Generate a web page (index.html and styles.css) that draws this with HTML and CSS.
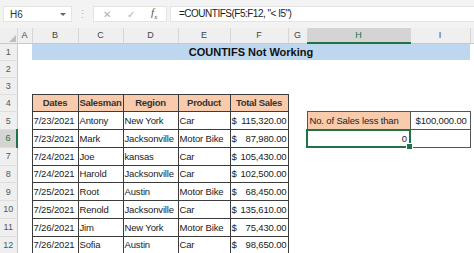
FILE: index.html
```html
<!DOCTYPE html>
<html lang="en">
<head>
  <meta charset="UTF-8">
  <title>COUNTIFS Not Working</title>
  <link rel="stylesheet" href="styles.css">
</head>
<body>
  <div class="toolbar">
    <div class="namebox"><span>H6</span><span class="caret"></span></div>
    <div class="grip">&#8942;</div>
    <div class="fbtns">
      <span class="fbtn">&#10005;</span>
      <span class="fbtn">&#10003;</span>
      <span class="fbtn fx">f<sub>x</sub></span>
    </div>
    <div class="formula">=COUNTIFS(F5:F12, "&lt; I5")</div>
  </div>
  <table class="sheet">
    <colgroup>
      <col class="c-rh"><col class="c-a"><col class="c-b"><col class="c-c"><col class="c-d"><col class="c-e"><col class="c-f"><col class="c-g"><col class="c-h"><col class="c-i"><col class="c-j">
    </colgroup>
    <tr class="colhead">
      <th class="corner"><svg width="7" height="7" viewBox="0 0 7 7"><path d="M7 0V7H0Z" fill="#bdbdbd"/></svg></th>
      <th>A</th><th>B</th><th>C</th><th>D</th><th>E</th><th>F</th><th>G</th><th class="sel-col">H</th><th>I</th><th></th>
    </tr>
    <tr class="r-top">
      <th class="rh">1</th><td></td>
      <td colspan="8" class="title">COUNTIFS Not Working</td><td></td>
    </tr>
    <tr class="r-top"><th class="rh">2</th><td></td><td></td><td></td><td></td><td></td><td></td><td></td><td></td><td></td><td></td></tr>
    <tr class="r-top"><th class="rh">3</th><td></td><td></td><td></td><td></td><td></td><td></td><td></td><td></td><td></td><td></td></tr>
    <tr>
      <th class="rh">4</th><td></td>
      <td class="t hd">Dates</td><td class="t hd">Salesman</td><td class="t hd">Region</td><td class="t hd">Product</td><td class="t hd">Total Sales</td>
      <td></td><td></td><td></td><td></td>
    </tr>
    <tr>
      <th class="rh">5</th><td></td>
      <td class="t">7/23/2021</td><td class="t">Antony</td><td class="t">New York</td><td class="t">Car</td>
      <td class="t"><div class="cur"><span>$</span><span>115,320.00</span></div></td>
      <td></td>
      <td class="m lbl">No. of Sales less than</td>
      <td class="m"><div class="cur"><span>$</span><span>100,000.00</span></div></td><td></td>
    </tr>
    <tr>
      <th class="rh sel-row">6</th><td></td>
      <td class="t">7/23/2021</td><td class="t">Mark</td><td class="t">Jacksonville</td><td class="t">Motor Bike</td>
      <td class="t"><div class="cur"><span>$</span><span>87,980.00</span></div></td>
      <td></td>
      <td class="m active">0<span class="handle"></span></td>
      <td class="m"></td><td></td>
    </tr>
    <tr>
      <th class="rh">7</th><td></td>
      <td class="t">7/24/2021</td><td class="t">Joe</td><td class="t">kansas</td><td class="t">Car</td>
      <td class="t"><div class="cur"><span>$</span><span>105,430.00</span></div></td>
      <td></td><td></td><td></td><td></td>
    </tr>
    <tr>
      <th class="rh">8</th><td></td>
      <td class="t">7/24/2021</td><td class="t">Harold</td><td class="t">Jacksonville</td><td class="t">Car</td>
      <td class="t"><div class="cur"><span>$</span><span>102,500.00</span></div></td>
      <td></td><td></td><td></td><td></td>
    </tr>
    <tr>
      <th class="rh">9</th><td></td>
      <td class="t">7/25/2021</td><td class="t">Root</td><td class="t">Austin</td><td class="t">Motor Bike</td>
      <td class="t"><div class="cur"><span>$</span><span>68,450.00</span></div></td>
      <td></td><td></td><td></td><td></td>
    </tr>
    <tr>
      <th class="rh">10</th><td></td>
      <td class="t">7/25/2021</td><td class="t">Renold</td><td class="t">Jacksonville</td><td class="t">Car</td>
      <td class="t"><div class="cur"><span>$</span><span>135,610.00</span></div></td>
      <td></td><td></td><td></td><td></td>
    </tr>
    <tr>
      <th class="rh">11</th><td></td>
      <td class="t">7/26/2021</td><td class="t">Jim</td><td class="t">New York</td><td class="t">Motor Bike</td>
      <td class="t"><div class="cur"><span>$</span><span>75,430.00</span></div></td>
      <td></td><td></td><td></td><td></td>
    </tr>
    <tr>
      <th class="rh">12</th><td></td>
      <td class="t">7/26/2021</td><td class="t">Sofia</td><td class="t">Austin</td><td class="t">Car</td>
      <td class="t"><div class="cur"><span>$</span><span>98,650.00</span></div></td>
      <td></td><td></td><td></td><td></td>
    </tr>
  </table>
</body>
</html>
```

FILE: styles.css
```css
body {
  margin: 0;
  width: 474px;
  height: 253px;
  overflow: hidden;
  background: #fff;
  font-family: "Liberation Sans", Arial, sans-serif;
  color: #222;
}
.toolbar {
  display: flex;
  align-items: center;
  height: 28px;
  padding-left: 3px;
  background: #f3f3f3;
  box-sizing: border-box;
}
.namebox {
  width: 69px;
  height: 16px;
  background: #fff;
  border: 1px solid #e4e4e4;
  box-sizing: border-box;
  display: flex;
  align-items: center;
  justify-content: space-between;
  padding: 0 5px 0 6px;
  font-size: 10px;
  color: #333;
}
.caret {
  width: 0;
  height: 0;
  border-left: 3px solid transparent;
  border-right: 3px solid transparent;
  border-top: 3px solid #666;
}
.grip {
  width: 21px;
  text-align: center;
  font-size: 11px;
  color: #b5b5b5;
}
.fbtns {
  width: 74px;
  height: 16px;
  padding-left: 1px;
  background: #fff;
  border: 1px solid #e4e4e4;
  box-sizing: border-box;
  display: flex;
  align-items: center;
}
.fbtn {
  width: 24px;
  text-align: center;
  font-size: 10px;
  color: #b0b0b0;
}
.fx {
  font-family: "Liberation Serif", serif;
  font-style: italic;
  font-size: 11px;
  color: #555;
}
.fx sub {
  font-size: 7px;
}
.formula {
  flex: 1;
  height: 16px;
  margin-left: 3px;
  padding-left: 8px;
  background: #fff;
  border: 1px solid #e4e4e4;
  border-right: none;
  box-sizing: border-box;
  font-size: 10px;
  letter-spacing: -0.5px;
  line-height: 14px;
  color: #222;
  white-space: nowrap;
}
.sheet {
  table-layout: fixed;
  width: 474px;
  border-collapse: collapse;
  font-size: 9.5px;
}
.c-rh { width: 17px; }
.c-a { width: 15px; }
.c-b { width: 46px; }
.c-c { width: 45px; }
.c-d { width: 55px; }
.c-e { width: 52px; }
.c-f { width: 58px; }
.c-g { width: 19px; }
.c-h { width: 103px; }
.c-i { width: 60px; }
.c-j { width: 4px; }
.sheet td,
.sheet th {
  padding: 0;
  white-space: nowrap;
  overflow: hidden;
}
.colhead th {
  background: #efefef;
  border-right: 1px solid #d6d6d6;
  border-bottom: 1px solid #c9c9c9;
  font-weight: normal;
  font-size: 9px;
  color: #444;
}
.colhead .corner {
  text-align: right;
  vertical-align: bottom;
  padding: 0 1px 1px 0;
  line-height: 0;
}
.colhead .sel-col {
  background: #d4d4d4;
  border-bottom: 2px solid #217346;
  color: #217346;
}
.sheet tr {
  height: 17.75px;
}
.sheet tr.r-top {
  height: 17px;
}
.sheet tr.colhead {
  height: 15px;
}
.rh {
  background: #efefef;
  border-right: 1px solid #c9c9c9;
  border-bottom: 1px solid #dedede;
  font-weight: normal;
  font-size: 9px;
  color: #555;
}
.rh.sel-row {
  background: #d4d4d4;
  border-right: 2px solid #217346;
  color: #217346;
}
.title {
  background: #bdd7ee;
  text-align: center;
  font-weight: bold;
  font-size: 11px;
  color: #111;
}
.t {
  border: 1px solid #3c3c3c;
  padding: 0 1px !important;
  letter-spacing: -0.15px;
  color: #222;
}
.t.hd {
  background: #f8cbad;
  text-align: center;
  font-weight: bold;
  letter-spacing: -0.3px;
  color: #333;
}
.cur {
  display: flex;
  justify-content: space-between;
}
.m {
  border: 1px solid #555;
  padding: 0 2px !important;
  letter-spacing: -0.15px;
}
.m.lbl {
  background: #f8cbad;
  color: #222;
}
.m .cur {
  padding: 0 3px;
}
.m.active {
  position: relative;
  border: 2px solid #217346;
  text-align: right;
  overflow: visible;
}
.handle {
  position: absolute;
  right: -4px;
  bottom: -4px;
  width: 5px;
  height: 5px;
  background: #217346;
  border: 1px solid #fff;
}
```
